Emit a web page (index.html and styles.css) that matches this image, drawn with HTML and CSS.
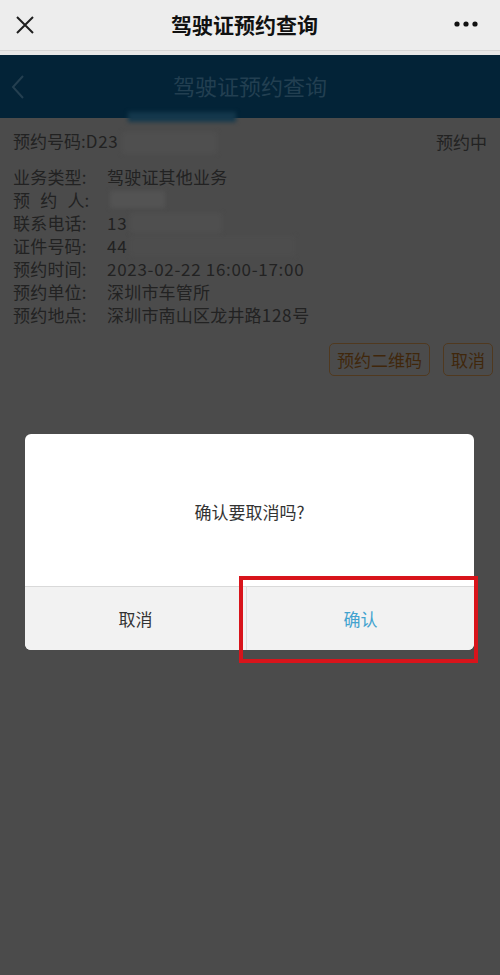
FILE: index.html
```html
<!DOCTYPE html>
<html>

<head>
    <title>驾驶证预约查询</title>
    <link rel="stylesheet" href="styles.css">
</head>

<body>
    <div class="wx-bar">
        <svg class="wx-close" width="20" height="20" viewBox="0 0 20 20">
            <path d="M2 2L18 18M18 2L2 18" stroke="#1f1f1f" stroke-width="2" fill="none" />
        </svg>
        <div class="wx-title">驾驶证预约查询</div>
        <svg class="wx-more" width="24" height="6" viewBox="0 0 24 6">
            <circle cx="3" cy="3" r="2.6" fill="#111" />
            <circle cx="12" cy="3" r="2.6" fill="#111" />
            <circle cx="21" cy="3" r="2.6" fill="#111" />
        </svg>
    </div>

    <div class="page">
        <div class="header">
            <svg class="back" width="14" height="24" viewBox="0 0 14 24">
                <path d="M12 1L2 12L12 23" stroke="#243f50" stroke-width="2" fill="none" />
            </svg>
            <div class="header-title">驾驶证预约查询</div>
            <span class="mosaic band"></span>
        </div>

        <div class="order-row">
            <div>预约号码:<span class="num">D23</span><span class="mosaic m-order"></span></div>
            <div>预约中</div>
        </div>

        <div class="details">
            <div class="line"><span class="label">业务类型:</span><span>驾驶证其他业务</span></div>
            <div class="line"><span class="label spaced">预 约 人:</span><span class="mosaic m-name"></span></div>
            <div class="line"><span class="label">联系电话:</span><span class="num">13</span><span class="mosaic m-phone"></span></div>
            <div class="line"><span class="label">证件号码:</span><span class="num">44</span><span class="mosaic m-id"></span></div>
            <div class="line"><span class="label">预约时间:</span><span class="num">2023-02-22 16:00-17:00</span></div>
            <div class="line"><span class="label">预约单位:</span><span>深圳市车管所</span></div>
            <div class="line"><span class="label">预约地点:</span><span>深圳市南山区龙井路<span class="num">128</span>号</span></div>
        </div>

        <div class="actions">
            <button class="outline">预约二维码</button>
            <button class="outline">取消</button>
        </div>
    </div>

    <div class="dialog">
        <div class="dialog-msg">确认要取消吗?</div>
        <div class="dialog-btns">
            <button class="cancel">取消</button>
            <button class="confirm">确认</button>
        </div>
    </div>

    <div class="highlight"></div>
</body>

</html>
```

FILE: styles.css
```css
body {
    margin: 0;
    background: #4b4b4b;
    font-family: "Noto Sans CJK SC", "Noto Sans", sans-serif;
    color: #222;
    height: 975px;
    overflow: hidden;
}

.wx-bar {
    height: 55px;
    background: #ededed;
    display: flex;
    align-items: center;
    justify-content: space-between;
    padding: 0 22px 0 15px;
    position: relative;
    box-sizing: border-box;
    border-bottom: 4px solid #e8e8e8;
}

.wx-bar::after {
    content: "";
    position: absolute;
    left: 0;
    right: 0;
    bottom: 0;
    height: 1px;
    background: #d6d6d6;
}

.wx-close {
    display: block;
    margin-top: -2px;
}

.wx-title {
    font-size: 21px;
    font-weight: bold;
    color: #111;
    margin-top: -3px;
}

.wx-more {
    display: block;
    margin-top: -3px;
}

.header {
    height: 63px;
    background: #032337;
    display: flex;
    align-items: center;
    justify-content: center;
    position: relative;
}

.back {
    position: absolute;
    left: 11px;
    top: 20px;
}

.header-title {
    font-size: 22px;
    color: #223f51;
    margin-top: -4px;
}

.mosaic {
    display: inline-block;
    background: #4f4f4f;
    filter: blur(2px);
    vertical-align: middle;
}

.band {
    position: absolute;
    left: 128px;
    bottom: -4px;
    width: 108px;
    height: 10px;
    background: #14384c;
}

.num {
    letter-spacing: 0.7px;
}

.order-row {
    display: flex;
    justify-content: space-between;
    align-items: center;
    padding: 8px 13px 0 13px;
    height: 30px;
    font-size: 17px;
}

.m-order {
    width: 95px;
    height: 22px;
    margin-left: 4px;
}

.details {
    padding: 9px 13px 0 13px;
    font-size: 17px;
}

.line {
    height: 23px;
    line-height: 23px;
    display: flex;
    align-items: center;
    letter-spacing: 0.2px;
}

.label {
    width: 94px;
    flex: none;
}

.spaced {
    word-spacing: 6px;
}

.m-name {
    width: 55px;
    height: 17px;
    margin-left: 3px;
    background: #535353;
}

.m-phone {
    width: 92px;
    height: 20px;
    margin-left: 3px;
}

.m-id {
    width: 165px;
    height: 20px;
    margin-left: 3px;
    background: #4d4d4d;
}

.actions {
    display: flex;
    justify-content: flex-end;
    gap: 13px;
    padding: 17px 7px 0 0;
}

.outline {
    background: transparent;
    border: 1.5px solid #50391f;
    border-radius: 5px;
    color: #40270b;
    font-family: inherit;
    font-size: 17px;
    height: 33px;
    padding: 0 7px;
    margin: 0;
}

.dialog {
    position: absolute;
    left: 25px;
    top: 434px;
    width: 449px;
    height: 216px;
    background: #fff;
    border-radius: 6px;
    overflow: hidden;
    display: flex;
    flex-direction: column;
}

.dialog-msg {
    flex: 1;
    display: flex;
    align-items: center;
    justify-content: center;
    font-size: 17px;
    color: #333;
    padding-top: 2px;
}

.dialog-btns {
    height: 63px;
    display: flex;
    background: #f2f2f2;
    border-top: 1px solid #d9d9d9;
}

.dialog-btns button {
    flex: 1;
    border: none;
    background: transparent;
    font-family: inherit;
    font-size: 17px;
    color: #333;
}

.dialog-btns .cancel {
    border-right: 1px solid #dcdcdc;
    flex: 0 0 222px;
}

.dialog-btns .confirm {
    color: #43a3cf;
}

.highlight {
    position: absolute;
    left: 239px;
    top: 576px;
    width: 231px;
    height: 79px;
    border: 4px solid #d8141b;
}
```
